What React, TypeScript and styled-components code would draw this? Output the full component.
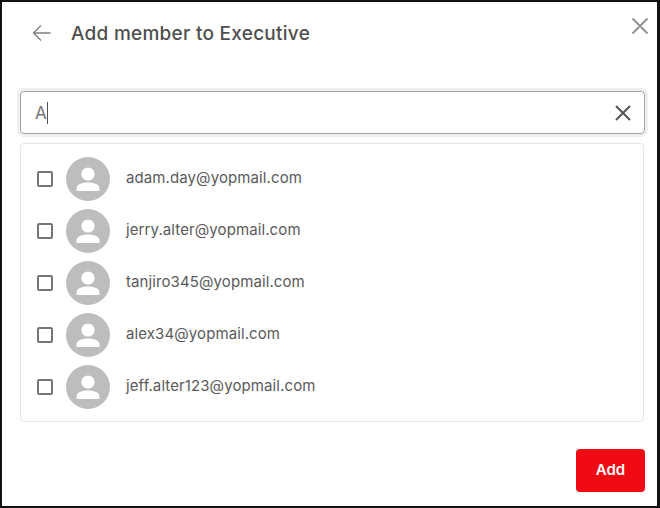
import { createGlobalStyle, styled } from "styled-components";

const GlobalStyle = createGlobalStyle`
  html, body {
    margin: 0;
    padding: 0;
    background: #fff;
  }
  * {
    box-sizing: border-box;
  }
`;

const Dialog = styled.div`
  position: relative;
  width: 660px;
  height: 508px;
  display: flex;
  flex-direction: column;
  padding: 0 12px 12px 18px;
  border: solid #111;
  border-width: 2px 3px 2px 2px;
  background: #fff;
  font-family: Inter, "Liberation Sans", sans-serif;
`;

const Header = styled.div`
  display: flex;
  align-items: center;
  gap: 20px;
  height: 62px;
  padding-left: 12px;
`;

const Title = styled.h2`
  margin: 0;
  font-size: 19px;
  font-weight: 500;
  letter-spacing: 0.26px;
  color: #4f4f4f;
`;

const CloseButton = styled.button`
  position: absolute;
  top: 15px;
  right: 8px;
  display: flex;
  padding: 0;
  border: 0;
  background: none;
`;

const SearchBox = styled.div`
  display: flex;
  align-items: center;
  justify-content: space-between;
  height: 43px;
  margin-top: 27px;
  padding: 0 13px 0 14px;
  border: 1px solid #a3a3a3;
  border-radius: 4px;
  box-shadow: 0 0 0 3px #efefef;
`;

const SearchValue = styled.span`
  font-size: 17px;
  line-height: 22px;
  color: #757575;
  border-right: 1px solid #555;
`;

const ClearIcon = styled.svg`
  display: block;
`;

const ResultList = styled.div`
  display: flex;
  flex-direction: column;
  gap: 8px;
  height: 279px;
  margin: 9px 1px 0 0;
  padding: 13px 16px;
  border: 1px solid #e6e6e6;
  border-radius: 4px;
`;

const ResultRow = styled.div`
  display: flex;
  align-items: center;
  height: 44px;
`;

const CheckBox = styled.span`
  width: 16px;
  height: 16px;
  margin-right: 13px;
  border: 2px solid #757575;
  border-radius: 2px;
`;

const Avatar = styled.span`
  display: flex;
  align-items: center;
  justify-content: center;
  width: 44px;
  height: 44px;
  margin-right: 16px;
  border-radius: 50%;
  background: #bdbdbd;
`;

const Email = styled.span`
  position: relative;
  top: -2px;
  font-size: 15px;
  letter-spacing: 0.1px;
  color: #5a5a5a;
`;

const Footer = styled.div`
  display: flex;
  justify-content: flex-end;
  margin-top: 27px;
`;

const AddButton = styled.button`
  width: 69px;
  height: 43px;
  padding: 0 0 2px;
  border: 0;
  border-radius: 4px;
  background: #f00a14;
  color: #fff;
  font-family: inherit;
  font-size: 15px;
  font-weight: 600;
`;

const emails = [
  "adam.day@yopmail.com",
  "jerry.alter@yopmail.com",
  "tanjiro345@yopmail.com",
  "alex34@yopmail.com",
  "jeff.alter123@yopmail.com",
];

const App = () => {
  return (
    <>
      <GlobalStyle />
      <Dialog>
        <Header>
          <svg width="19" height="18" viewBox="0 0 19 18" fill="none" stroke="#808080" strokeWidth="1.4">
            <path d="M18.5 9H1.5M9 1.5L1.5 9L9 16.5" />
          </svg>
          <Title>Add member to Executive</Title>
        </Header>
        <CloseButton>
          <svg width="18" height="18" viewBox="0 0 18 18" fill="none" stroke="#949494" strokeWidth="2">
            <path d="M1.5 1.5L16.5 16.5M16.5 1.5L1.5 16.5" />
          </svg>
        </CloseButton>
        <SearchBox>
          <SearchValue>A</SearchValue>
          <ClearIcon width="16" height="16" viewBox="0 0 16 16" fill="none" stroke="#555" strokeWidth="2">
            <path d="M1 1L15 15M15 1L1 15" />
          </ClearIcon>
        </SearchBox>
        <ResultList>
          {emails.map((email) => (
            <ResultRow key={email}>
              <CheckBox />
              <Avatar>
                <svg width="24" height="24" viewBox="0 0 24 24" fill="#fff">
                  <circle cx="12" cy="7" r="6.6" />
                  <path d="M0.5 24v-3c0-3.8 7-5.5 11.5-5.5s11.5 1.7 11.5 5.5v3z" />
                </svg>
              </Avatar>
              <Email>{email}</Email>
            </ResultRow>
          ))}
        </ResultList>
        <Footer>
          <AddButton>Add</AddButton>
        </Footer>
      </Dialog>
    </>
  );
};

export default App;
